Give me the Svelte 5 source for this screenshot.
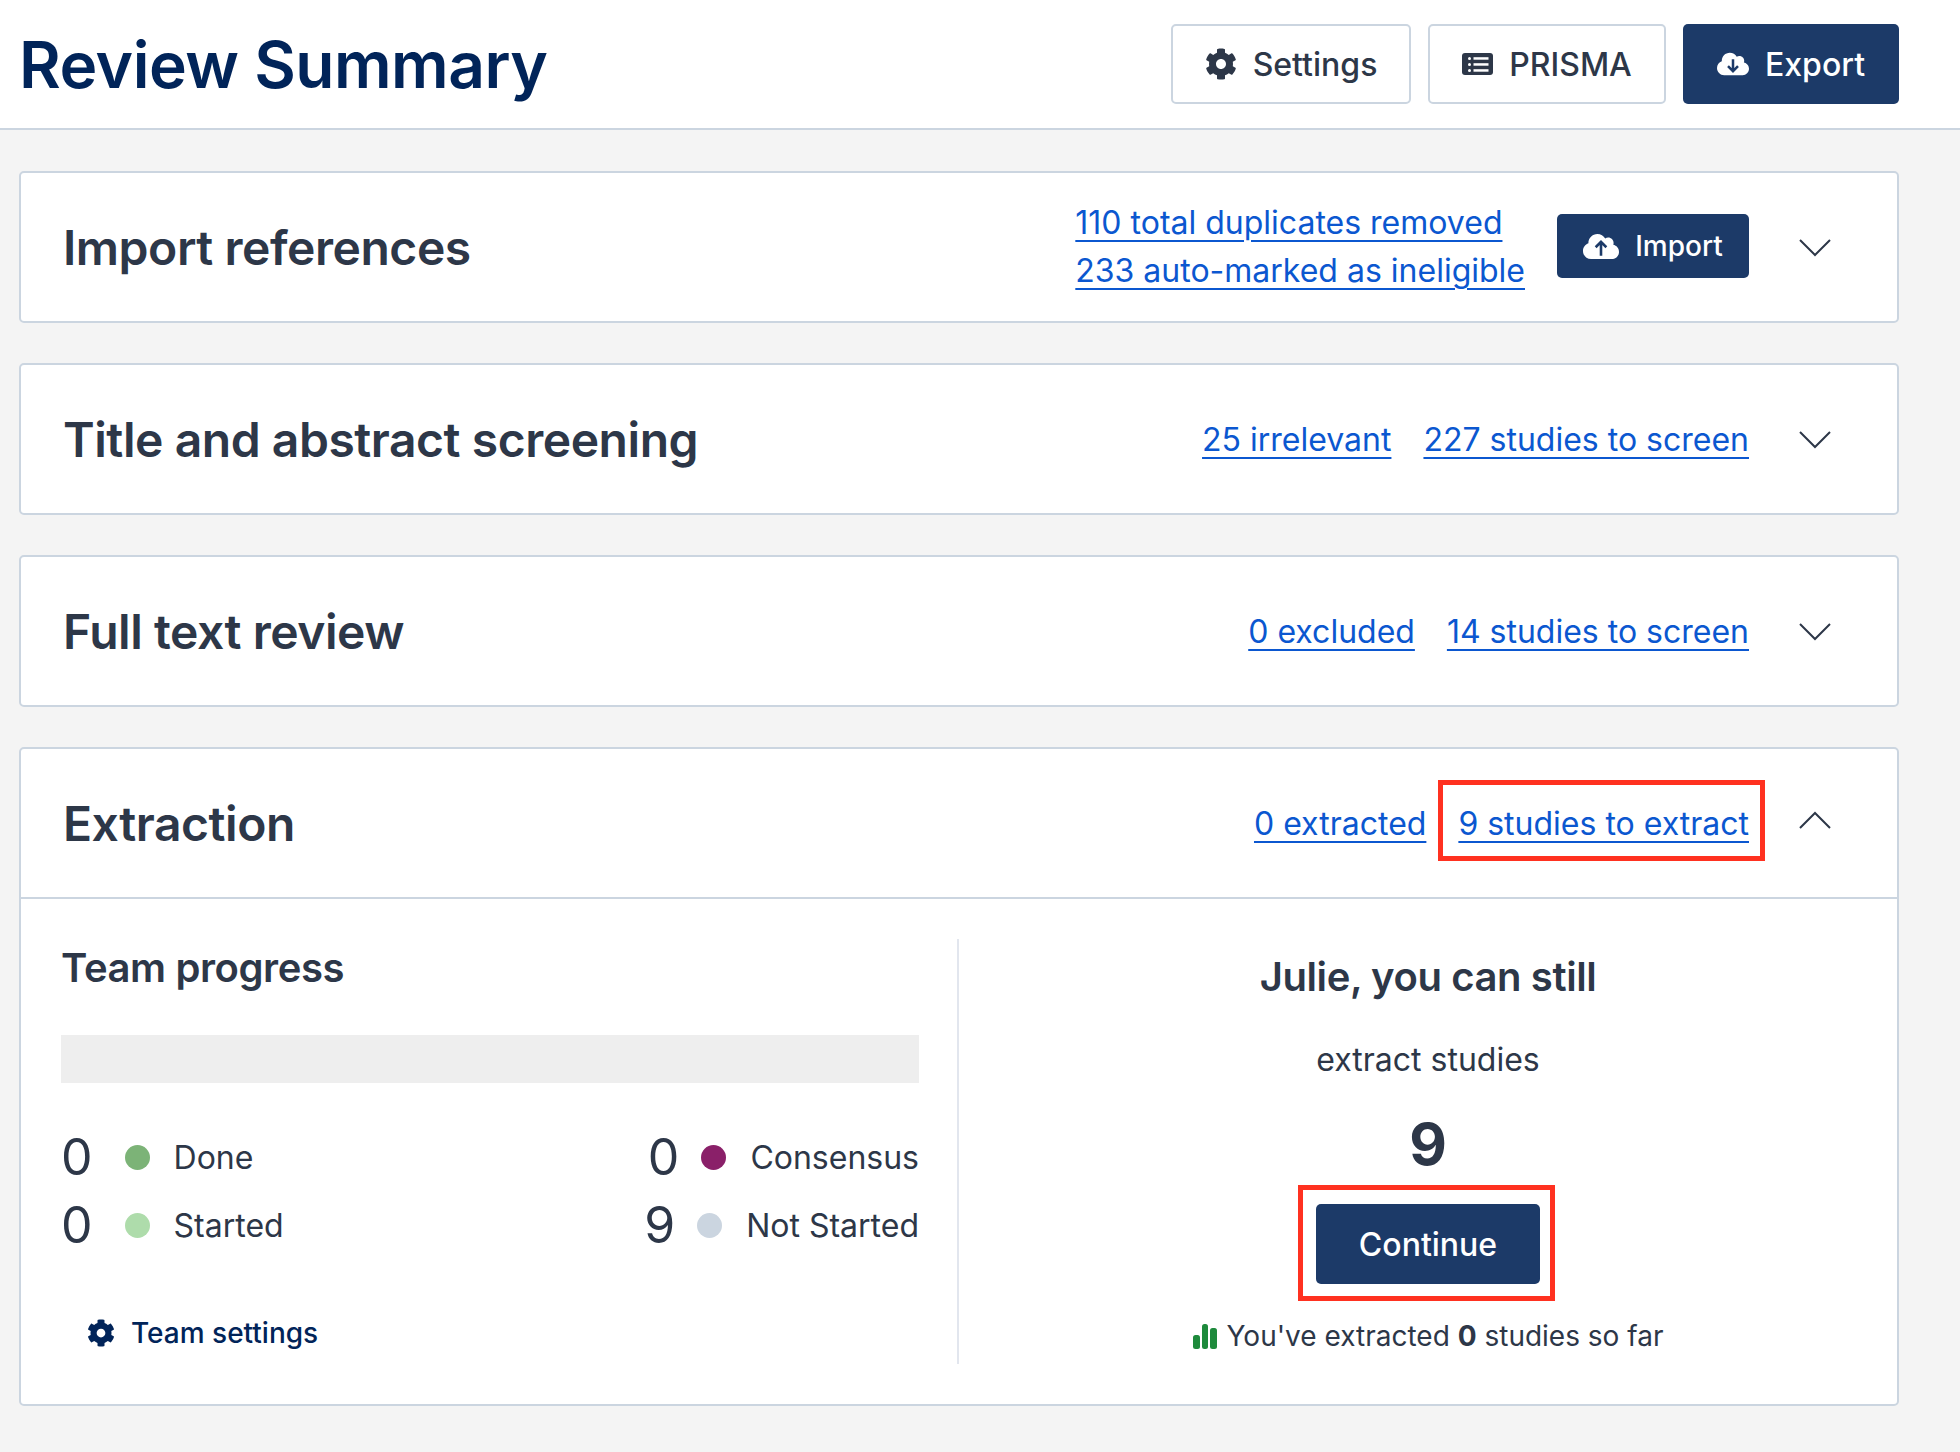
<script lang="ts">
	const sections = [
		{ title: 'Title and abstract screening', links: ['25 irrelevant', '227 studies to screen'] },
		{ title: 'Full text review', links: ['0 excluded', '14 studies to screen'] },
	];
	const cog =
		'M487.4 315.7l-42.6-24.6c4.3-23.2 4.3-47 0-70.2l42.6-24.6c4.9-2.8 7.1-8.6 5.5-14-11.1-35.6-30-67.8-54.7-94.6-3.8-4.1-10-5.1-14.8-2.3L380.8 110c-17.9-15.4-38.5-27.3-60.8-35.1V25.8c0-5.6-3.9-10.5-9.4-11.7-36.7-8.2-74.3-7.8-109.2 0-5.5 1.2-9.4 6.1-9.4 11.7V75c-22.2 7.9-42.8 19.8-60.8 35.1L88.7 85.5c-4.9-2.8-11-1.9-14.8 2.3-24.7 26.7-43.6 58.9-54.7 94.6-1.7 5.4.6 11.2 5.5 14L67.3 221c-4.3 23.2-4.3 47 0 70.2l-42.6 24.6c-4.9 2.8-7.1 8.6-5.5 14 11.1 35.6 30 67.8 54.7 94.6 3.8 4.1 10 5.1 14.8 2.3l42.6-24.6c17.9 15.4 38.5 27.3 60.8 35.1v49.2c0 5.6 3.9 10.5 9.4 11.7 36.7 8.2 74.3 7.8 109.2 0 5.5-1.2 9.4-6.1 9.4-11.7v-49.2c22.2-7.9 42.8-19.8 60.8-35.1l42.6 24.6c4.9 2.8 11 1.9 14.8-2.3 24.7-26.7 43.6-58.9 54.7-94.6 1.5-5.5-.7-11.3-5.6-14.1zM256 336c-44.1 0-80-35.9-80-80s35.9-80 80-80 80 35.9 80 80-35.9 80-80 80z';
	const cloud =
		'M537.6 226.6c4.1-10.7 6.4-22.4 6.4-34.6 0-53-43-96-96-96-19.7 0-38.1 6-53.3 16.2C367 64.2 315.3 32 256 32c-88.4 0-160 71.6-160 160 0 2.7.1 5.4.2 8.1C40.2 219.8 0 273.2 0 336c0 79.5 64.5 144 144 144h368c70.7 0 128-57.3 128-128 0-61.9-44-113.6-102.4-125.4z';
</script>

<header class="topbar">
	<h1>Review Summary</h1>
	<div class="actions">
		<button class="btn outline">
			<svg class="ico" width="32" height="32" viewBox="0 0 512 512"><path d={cog} fill="currentColor" /></svg>
			Settings
		</button>
		<button class="btn outline prisma">
			<svg class="ico" width="31" height="22" viewBox="0 0 31 22">
				<rect width="31" height="22" rx="3" fill="currentColor" />
				<circle cx="7.5" cy="5.5" r="1.5" fill="#fff" />
				<circle cx="7.5" cy="11.5" r="1.5" fill="#fff" />
				<circle cx="7.5" cy="17.5" r="1.5" fill="#fff" />
				<rect x="11.5" y="4.2" width="15" height="2.5" fill="#fff" />
				<rect x="11.5" y="10.2" width="15" height="2.5" fill="#fff" />
				<rect x="11.5" y="16.2" width="15" height="2.5" fill="#fff" />
			</svg>
			PRISMA
		</button>
		<button class="btn solid">
			<svg class="ico" width="32" height="26" viewBox="0 0 640 512">
				<path d={cloud} fill="currentColor" />
				<path d="M320 160V400M220 300l100 100 100-100" fill="none" stroke="#1c3a68" stroke-width="50" />
			</svg>
			Export
		</button>
	</div>
</header>

<main class="content">
	<section class="card">
		<div class="card-head">
			<h2>Import references</h2>
			<div class="stack">
				<a href="#a">110 total duplicates removed</a>
				<a href="#a">233 auto-marked as ineligible</a>
			</div>
			<button class="btn solid small">
				<svg class="ico" width="36" height="29" viewBox="0 0 640 512">
					<path d={cloud} fill="currentColor" />
					<path d="M320 420V175M225 270l95-95 95 95" fill="none" stroke="#1c3a68" stroke-width="46" />
				</svg>
				Import
			</button>
			<svg class="chev" width="32" height="18" viewBox="0 0 32 18"><path d="M1 1l15 15L31 1" fill="none" stroke="#2d3748" stroke-width="2" /></svg>
		</div>
	</section>

	{#each sections as s}
		<section class="card">
			<div class="card-head">
				<h2>{s.title}</h2>
				<div class="links">
					{#each s.links as l}<a href="#a">{l}</a>{/each}
				</div>
				<svg class="chev" width="32" height="18" viewBox="0 0 32 18"><path d="M1 1l15 15L31 1" fill="none" stroke="#2d3748" stroke-width="2" /></svg>
			</div>
		</section>
	{/each}

	<section class="card">
		<div class="card-head open">
			<h2>Extraction</h2>
			<div class="links">
				<a href="#a">0 extracted</a>
				<a href="#a" class="marked">9 studies to extract</a>
			</div>
			<svg class="chev up" width="32" height="18" viewBox="0 0 32 18"><path d="M1 17L16 2l15 15" fill="none" stroke="#2d3748" stroke-width="2" /></svg>
		</div>
		<div class="card-body">
			<div class="team">
				<h3>Team progress</h3>
				<div class="bar"></div>
				<div class="stats">
					<div class="stat"><span class="num">0</span><i class="dot done"></i><span>Done</span></div>
					<div class="stat"><span class="num">0</span><i class="dot consensus"></i><span>Consensus</span></div>
					<div class="stat"><span class="num">0</span><i class="dot started"></i><span>Started</span></div>
					<div class="stat"><span class="num">9</span><i class="dot waiting"></i><span>Not Started</span></div>
				</div>
				<a class="team-settings" href="#a">
					<svg width="28" height="28" viewBox="0 0 512 512"><path d={cog} fill="currentColor" /></svg>
					Team settings
				</a>
			</div>
			<div class="mine">
				<h3>Julie, you can still</h3>
				<p class="sub">extract studies</p>
				<div class="count">9</div>
				<div class="continue-wrap"><button class="btn solid continue">Continue</button></div>
				<p class="tally">
					<svg width="24" height="25" viewBox="0 0 24 25">
						<rect x="0" y="11" width="7" height="14" rx="2.5" fill="#1e8a3c" />
						<rect x="9" y="0" width="6" height="25" rx="2.5" fill="#1e8a3c" />
						<rect x="17" y="4" width="7" height="21" rx="2.5" fill="#1e8a3c" />
					</svg>
					<span>You've extracted <b>0</b> studies so far</span>
				</p>
			</div>
		</div>
	</section>
</main>

<style>
	:global(body) {
		margin: 0;
		background: #f4f4f4;
		font-family: Inter, 'Liberation Sans', sans-serif;
		color: #2d3748;
	}

	.topbar {
		display: flex;
		align-items: center;
		justify-content: space-between;
		height: 128px;
		padding: 0 61px 0 19px;
		background: #fff;
		border-bottom: 2px solid #cbd5e0;
	}

	h1 {
		margin: 0;
		font-size: 64px;
		font-weight: 600;
		color: #012459;
		letter-spacing: -0.5px;
	}

	.actions {
		display: flex;
		gap: 17px;
	}

	.btn {
		display: inline-flex;
		align-items: center;
		justify-content: center;
		gap: 16px;
		height: 80px;
		border-radius: 5px;
		font: 500 32px Inter, sans-serif;
		box-sizing: border-box;
	}

	.outline {
		width: 240px;
		background: #fff;
		border: 2px solid #cbd5e0;
		color: #2d3748;
	}

	.prisma {
		width: 238px;
	}

	.solid {
		width: 216px;
		background: #1c3a68;
		border: 0;
		color: #fff;
	}

	.small {
		width: 192px;
		height: 64px;
		font-size: 28px;
		margin: 0 0 2px 32px;
	}

	.ico {
		flex-shrink: 0;
	}

	.content {
		display: flex;
		flex-direction: column;
		gap: 40px;
		padding: 41px 61px 47px 19px;
	}

	.card {
		background: #fff;
		border: 2px solid #cbd5e0;
		border-radius: 5px;
	}

	.card-head {
		display: flex;
		align-items: center;
		height: 148px;
		padding: 0 66px 0 42px;
	}

	.open {
		border-bottom: 2px solid #cbd5e0;
	}

	h2 {
		flex: 1;
		margin: 0;
		font-size: 48px;
		font-weight: 600;
		letter-spacing: -0.45px;
	}

	a {
		color: #0b57d0;
		font-size: 32px;
		text-underline-offset: 6px;
		text-decoration-thickness: 2px;
	}

	.stack {
		display: flex;
		flex-direction: column;
		gap: 8px;
		line-height: 40px;
	}

	.links {
		display: flex;
		gap: 32px;
	}

	.marked {
		position: relative;
	}

	/* red annotation from the screenshot */
	.marked::after {
		content: '';
		position: absolute;
		inset: -24px -16px -18px -20px;
		border: 5px solid #ff3120;
	}

	.chev {
		margin: 2px 0 0 50px;
	}

	.up {
		margin: 0 0 6px 50px;
	}

	.card-body {
		display: flex;
		padding: 40px 0 40px 40px;
	}

	.team {
		width: 858px;
		padding: 4px 38px 13px 0;
		border-right: 2px solid #e2e6ee;
	}

	h3 {
		margin: 0;
		font-size: 40px;
		font-weight: 600;
		letter-spacing: -0.4px;
	}

	.bar {
		height: 48px;
		margin-top: 43px;
		background: #eee;
	}

	.stats {
		display: grid;
		grid-template-columns: auto auto;
		justify-content: space-between;
		row-gap: 10px;
		margin-top: 45px;
	}

	.stat {
		display: flex;
		align-items: center;
		height: 58px;
		font-size: 32px;
	}

	.stat:nth-child(even) {
		justify-content: flex-end;
	}

	.num {
		font-size: 50px;
		font-weight: 400;
		margin-right: 32px;
	}

	.stat:nth-child(even) .num {
		margin-right: 22px;
	}

	.dot {
		width: 25px;
		height: 25px;
		border-radius: 50%;
		margin-right: 24px;
	}

	.done { background: #7cb377; }
	.consensus { background: #8a2069; }
	.started { background: #aedcab; }
	.waiting { background: #cbd5e0; }

	.team-settings {
		display: inline-flex;
		align-items: center;
		gap: 16px;
		margin: 62px 0 0 26px;
		color: #012459;
		font-size: 28px;
		font-weight: 500;
		text-decoration: none;
	}

	.mine {
		flex: 1;
		display: flex;
		flex-direction: column;
		align-items: center;
	}

	.mine h3 {
		margin-top: 13px;
	}

	.sub {
		margin: 39px 0 0;
		font-size: 32px;
	}

	.count {
		margin-top: 30px;
		font-size: 58px;
		font-weight: 700;
	}

	.continue-wrap {
		position: relative;
		margin-top: 25px;
	}

	.continue-wrap::after {
		content: '';
		position: absolute;
		inset: -19px -15px -17px -18px;
		border: 5px solid #ff3120;
	}

	.continue {
		width: 224px;
	}

	.tally {
		display: flex;
		align-items: center;
		gap: 10px;
		margin: 35px 0 0;
		font-size: 28px;
		white-space: pre;
	}

	.tally b {
		font-weight: 700;
	}
</style>
